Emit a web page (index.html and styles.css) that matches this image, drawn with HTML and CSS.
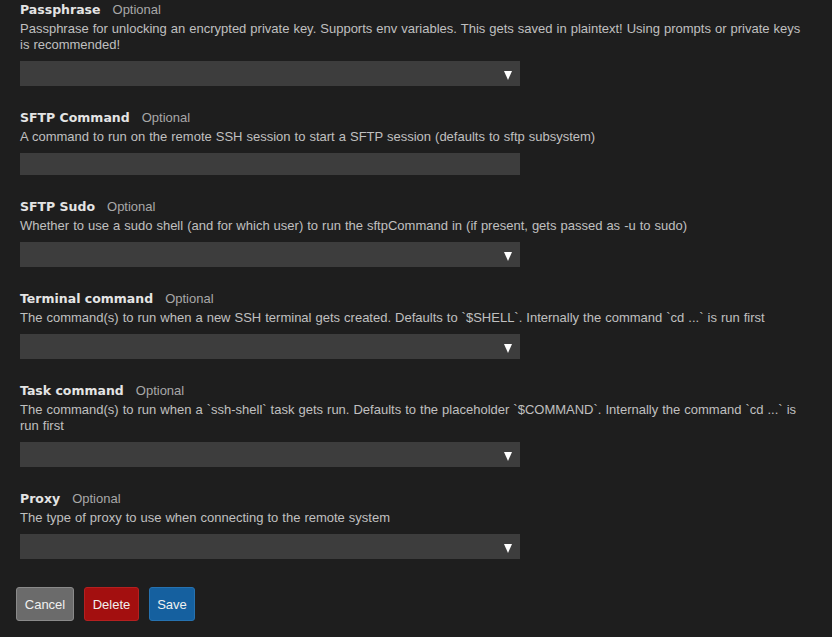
FILE: index.html
```html
<!DOCTYPE html>
<html>
<head>
<meta charset="utf-8">
<link rel="stylesheet" href="styles.css">
</head>
<body>
<div class="form">
  <div class="field">
    <div class="head"><span class="name">Passphrase</span><span class="opt">Optional</span></div>
    <div class="desc">Passphrase for unlocking an encrypted private key. Supports env variables. This gets saved in plaintext! Using prompts or private keys is recommended!</div>
    <div class="select"><span class="arrow"></span></div>
  </div>
  <div class="field">
    <div class="head"><span class="name">SFTP Command</span><span class="opt">Optional</span></div>
    <div class="desc">A command to run on the remote SSH session to start a SFTP session (defaults to sftp subsystem)</div>
    <div class="input"></div>
  </div>
  <div class="field">
    <div class="head"><span class="name">SFTP Sudo</span><span class="opt">Optional</span></div>
    <div class="desc">Whether to use a sudo shell (and for which user) to run the sftpCommand in (if present, gets passed as -u to sudo)</div>
    <div class="select"><span class="arrow"></span></div>
  </div>
  <div class="field">
    <div class="head"><span class="name">Terminal command</span><span class="opt">Optional</span></div>
    <div class="desc">The command(s) to run when a new SSH terminal gets created. Defaults to `$SHELL`. Internally the command `cd ...` is run first</div>
    <div class="select"><span class="arrow"></span></div>
  </div>
  <div class="field">
    <div class="head"><span class="name">Task command</span><span class="opt">Optional</span></div>
    <div class="desc">The command(s) to run when a `ssh-shell` task gets run. Defaults to the placeholder `$COMMAND`. Internally the command `cd ...` is run first</div>
    <div class="select"><span class="arrow"></span></div>
  </div>
  <div class="field">
    <div class="head"><span class="name">Proxy</span><span class="opt">Optional</span></div>
    <div class="desc">The type of proxy to use when connecting to the remote system</div>
    <div class="select"><span class="arrow"></span></div>
  </div>
  <div class="buttons">
    <button class="btn cancel">Cancel</button>
    <button class="btn delete">Delete</button>
    <button class="btn save">Save</button>
  </div>
</div>
</body>
</html>
```
FILE: styles.css
```css
html, body {
  margin: 0;
  padding: 0;
  background: #1e1e1e;
}
body {
  font-family: "Liberation Sans", Arial, sans-serif;
  font-size: 13px;
  color: #c2c2c2;
}
.form {
  padding: 2px 20px 0 20px;
  display: flex;
  flex-direction: column;
}
.field {
  display: flex;
  flex-direction: column;
  margin-bottom: 24px;
}
.head {
  display: flex;
  align-items: baseline;
  gap: 12px;
  height: 16px;
  line-height: 16px;
}
.name {
  font-family: "DejaVu Sans", Verdana, sans-serif;
  font-weight: bold;
  font-size: 12.5px;
  color: #e4e4e4;
}
.opt {
  color: #a8a8a8;
  font-size: 13px;
}
.desc {
  margin-top: 3px;
  line-height: 16px;
  font-size: 13px;
  word-spacing: 0.4px;
  color: #c0c0c0;
}
.select, .input {
  width: 500px;
  height: 25px;
  background: #3d3d3d;
  margin-top: 8px;
  position: relative;
}
.input {
  height: 22px;
}
.arrow {
  position: absolute;
  right: 8px;
  top: 10px;
  width: 0;
  height: 0;
  border-left: 4.5px solid transparent;
  border-right: 4.5px solid transparent;
  border-top: 9px solid #ffffff;
}
.buttons {
  display: flex;
  gap: 10px;
  margin-left: -4px;
  margin-top: 4px;
}
.btn {
  font-family: "Liberation Sans", Arial, sans-serif;
  font-size: 13px;
  color: #f0f0f0;
  height: 34px;
  border-radius: 3px;
  padding: 0 6px;
  border: 1px solid transparent;
}
.cancel {
  background: #6b6b6b;
  border-color: #8a8a8a;
  width: 58px;
}
.delete {
  background: #a30f0f;
  border-color: #b52020;
  width: 55px;
}
.save {
  background: #15609f;
  border-color: #2672b0;
  width: 46px;
}
```
